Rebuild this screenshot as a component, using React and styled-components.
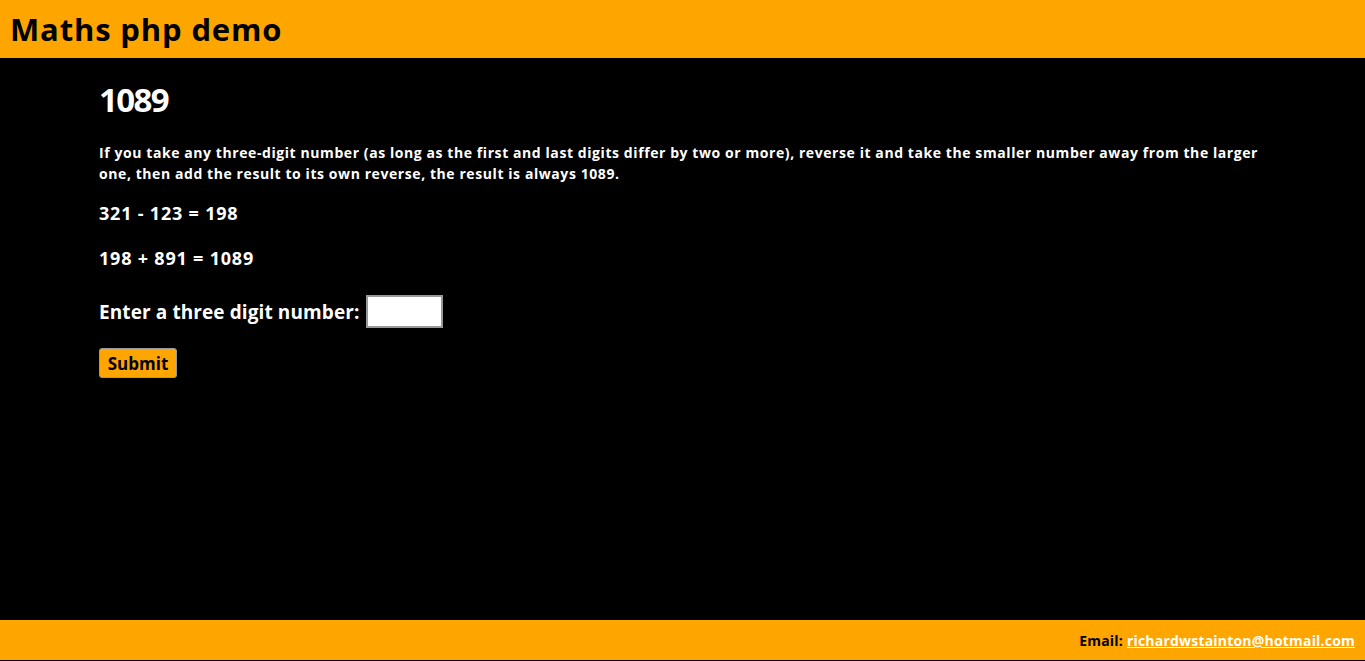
import React, { useState } from 'react';
import styled, { createGlobalStyle } from 'styled-components';

const GlobalStyle = createGlobalStyle`
  html, body {
    margin: 0;
    padding: 0;
    background: #000;
  }
  body {
    font-family: 'Open Sans', 'Noto Sans', sans-serif;
  }
`;

const Page = styled.div`
  display: flex;
  flex-direction: column;
  min-height: 661px;
  background: #000;
`;

const Header = styled.header`
  background: #ffa500;
  height: 58px;
  display: flex;
  align-items: center;
  padding: 0 10px;
`;

const SiteTitle = styled.h1`
  margin: 0 0 1px;
  font-size: 31px;
  line-height: 36px;
  font-weight: 700;
  color: #000;
  letter-spacing: 0.85px;
`;

const Main = styled.main`
  flex: 1;
  padding: 22px 99px 0;
  color: #fff;
`;

const Heading = styled.h2`
  margin: 0 0 22px;
  font-size: 33px;
  line-height: 40px;
  font-weight: 700;
  letter-spacing: -1.6px;
`;

const Intro = styled.p`
  margin: 0 0 17px;
  font-size: 14px;
  font-weight: 700;
  line-height: 21px;
  max-width: 1172px;
  letter-spacing: 0.58px;
`;

const Sum = styled.p`
  margin: 0 0 21px;
  font-size: 18px;
  font-weight: 700;
  line-height: 24px;
  letter-spacing: 0.8px;
`;

const Form = styled.form`
  display: flex;
  flex-direction: column;
  align-items: flex-start;
  gap: 20px;
  margin-top: 25px;
`;

const Field = styled.label`
  display: flex;
  align-items: center;
  gap: 6px;
  font-size: 19px;
  font-weight: 700;
  letter-spacing: 0.1px;
`;

const NumberInput = styled.input`
  width: 73px;
  height: 29px;
  padding: 0;
  border: 2px solid #999;
  background: #fff;
  font-size: 18px;
  outline: none;
`;

const SubmitButton = styled.button`
  width: 78px;
  height: 30px;
  padding: 0;
  background: #ffa500;
  border: 1px solid #999;
  border-radius: 3px;
  font-family: inherit;
  font-size: 17px;
  font-weight: 700;
  color: #000;
  cursor: pointer;
`;

const Footer = styled.footer`
  background: #ffa500;
  height: 40px;
  margin-bottom: 1px;
  display: flex;
  align-items: center;
  justify-content: flex-end;
  padding: 0 10px;
  font-size: 14px;
  font-weight: 700;
  color: #000;
  letter-spacing: 0.2px;
`;

const Mail = styled.a`
  color: #fff;
  margin-left: 4px;
  text-decoration: underline;
`;

const App = () => {
  const [value, setValue] = useState('');

  return (
    <>
      <GlobalStyle />
      <Page>
        <Header>
          <SiteTitle>Maths php demo</SiteTitle>
        </Header>
        <Main>
          <Heading>1089</Heading>
          <Intro>
            If you take any three-digit number (as long as the first and last digits differ by two or more),
            reverse it and take the smaller number away from the larger one, then add the result to its own
            reverse, the result is always 1089.
          </Intro>
          <Sum>321 - 123 = 198</Sum>
          <Sum>198 + 891 = 1089</Sum>
          <Form onSubmit={e => e.preventDefault()}>
            <Field>
              Enter a three digit number:
              <NumberInput value={value} onChange={e => setValue(e.target.value)} />
            </Field>
            <SubmitButton type="submit">Submit</SubmitButton>
          </Form>
        </Main>
        <Footer>
          Email: <Mail href="mailto:richardwstainton@hotmail.com">richardwstainton@hotmail.com</Mail>
        </Footer>
      </Page>
    </>
  );
};

export default App;
